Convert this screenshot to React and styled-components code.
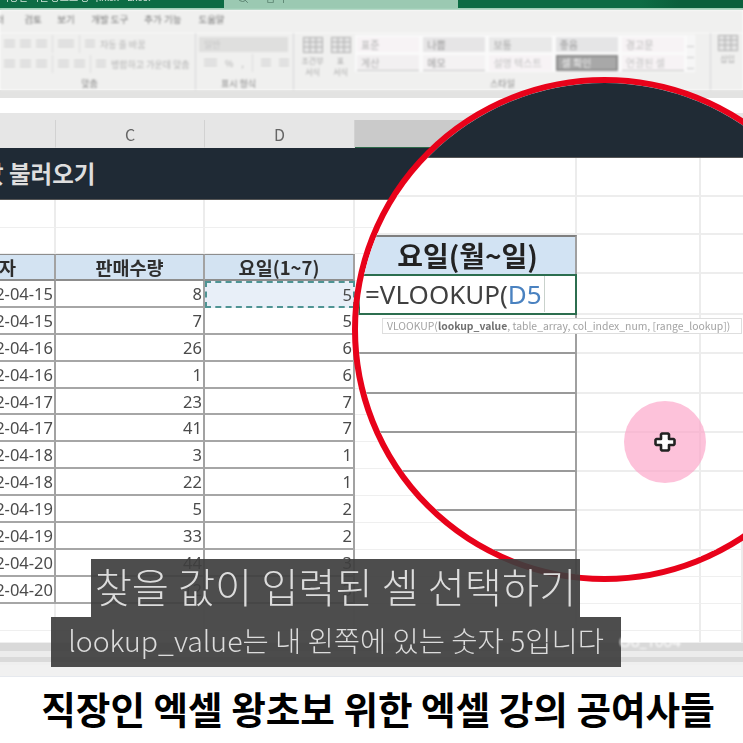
import React from 'react';
import styled, { createGlobalStyle, css } from 'styled-components';
import { Search } from 'lucide-react';

const KR = `'Noto Sans CJK KR', 'Noto Sans', sans-serif`;

const GlobalStyle = createGlobalStyle`
  html, body {
    margin: 0;
    padding: 0;
    background: #fff;
  }
  * { box-sizing: border-box; }
`;

const Page = styled.div`
  position: relative;
  width: 743px;
  height: 743px;
  overflow: hidden;
  display: flex;
  flex-direction: column;
  font-family: ${KR};
  background: #fff;
`;

/* title bar */
const TitleBar = styled.div`
  height: 10px;
  flex: none;
  display: flex;
  overflow: hidden;
  background: linear-gradient(90deg, #0c6c44 0 640px, #0a5f3c 680px);
  border-bottom: 2px solid #9accb3;
  filter: blur(0.7px);
`;

const DocName = styled.div`
  width: 224px;
  margin-top: -9px;
  font-size: 10px;
  line-height: 12px;
  color: #cfe3d8;
  white-space: nowrap;
`;

const SearchBox = styled.div`
  width: 234px;
  background: #9bc9b2;
  display: flex;
  gap: 16px;
  padding-left: 13px;
  margin-top: -2px;
  font-size: 11px;
  line-height: 11px;
  color: #5d8573;
  span { margin-top: -6px; }
  svg { margin-top: -6px; }
`;

/* ribbon */
const Tabs = styled.div`
  height: 23px;
  flex: none;
  background: #f0f0ef;
  display: flex;
  align-items: center;
  padding-bottom: 5px;
  font-size: 9.5px;
  color: #777;
  filter: blur(0.8px);
`;

const Tab = styled.span`
  margin-left: ${(p) => p.$gap}px;
  white-space: nowrap;
`;

const Ribbon = styled.div`
  height: 57px;
  flex: none;
  background: #f0f0ef;
  display: flex;
  filter: blur(0.9px);
  color: #b0b0b0;
`;

const Group = styled.div`
  width: ${(p) => p.$w}px;
  flex: none;
  display: flex;
  flex-direction: column;
  border-right: 1px solid ${(p) => (p.$bare ? 'transparent' : '#d6d6d6')};
  padding-top: ${(p) => p.$top ?? 0}px;
  padding-left: ${(p) => p.$left ?? 0}px;
  height: 57px;
`;

const GroupBody = styled.div`
  flex: 1;
  display: flex;
  flex-direction: column;
  gap: ${(p) => p.$gap ?? 8}px;
`;

const GroupLabel = styled.div`
  font-size: 9px;
  line-height: 12px;
  height: 12px;
  text-align: center;
  color: #868686;
  margin-top: auto;
  padding-right: ${(p) => p.$shift ?? 0}px;
`;

const ToolRow = styled.div`
  height: ${(p) => p.$h ?? 12}px;
  display: flex;
  align-items: center;
  gap: ${(p) => p.$gap ?? 5}px;
  font-size: 9px;
  white-space: nowrap;
`;

const Tool = styled.span`
  display: block;
  width: ${(p) => p.$w ?? 11}px;
  height: 9px;
  flex: none;
  background: repeating-linear-gradient(180deg, #c4c4c4 0 1px, transparent 1px 3px);
`;

const VRule = styled.span`
  width: 1px;
  height: 18px;
  background: #dcdcdc;
  flex: none;
`;

const NumberSelect = styled.div`
  height: 15px;
  width: 89px;
  margin-left: 3px;
  background: #dfdfde;
  font-size: 9px;
  line-height: 15px;
  padding-left: 5px;
  color: #c4c4c4;
`;

const BigTool = styled.div`
  width: 27px;
  flex: none;
  text-align: center;
  font-size: 8px;
  line-height: 11px;
  color: #a5a5a5;
  svg { display: block; margin: 0 auto 2px; }
`;

const StyleBox = styled.div`
  width: 340px;
  height: 37px;
  margin-top: 1px;
  background: #fafafa;
  display: grid;
  grid-template-columns: repeat(5, 1fr);
  gap: 3px 4px;
  padding: 2px 11px 2px 2px;
  position: relative;
`;

const StyleCell = styled.div`
  background: ${(p) => p.$bg ?? '#f7f3f5'};
  color: ${(p) => p.$color ?? '#b0b0b0'};
  font-size: 10px;
  line-height: 15px;
  padding-left: 4px;
  white-space: nowrap;
  ${(p) => p.$line && css`border-bottom: 1px solid #c4c4c4;`}
  ${(p) => p.$box && css`border: 2px solid #8c8c8c; line-height: 11px;`}
`;

const StyleScroll = styled.div`
  position: absolute;
  right: 1px;
  top: 1px;
  bottom: 1px;
  width: 7px;
  background: repeating-linear-gradient(180deg, #f6f6f6 0 10px, #c9c9c9 10px 11px);
`;

const RibbonBottom = styled.div`
  height: 8px;
  flex: none;
  background: #e3e3e2;
`;

const FormulaBar = styled.div`
  height: 15px;
  flex: none;
  background: #fff;
`;

const ColumnHeads = styled.div`
  height: 35px;
  flex: none;
  background: #e6e6e6;
  display: grid;
  grid-template-columns: 56px 149px 150px 222px 124px 42px;
  align-items: end;
  filter: blur(0.6px);
`;

const ColumnHead = styled.div`
  height: 28px;
  border-right: 1px solid #d2d2d2;
  text-align: center;
  font-size: 16px;
  line-height: 28px;
  color: ${(p) => (p.$active ? '#34684c' : '#666')};
  background: ${(p) => (p.$active ? '#cacaca' : 'transparent')};
  border-bottom: 1px solid ${(p) => (p.$active ? '#2d6a4a' : 'transparent')};
`;

/* sheet */
const Sheet = styled.div`
  height: 495px;
  flex: none;
  display: flex;
  flex-direction: column;
  overflow: hidden;
  filter: blur(0.55px);
`;

const TitleBand = styled.div`
  height: 52px;
  flex: none;
  background: #1f2a35;
  color: #dedede;
  font-size: 23.5px;
  font-weight: 700;
  line-height: 50px;
  white-space: nowrap;
  overflow: hidden;
  border-bottom: 1px solid #555;
`;

const TitleText = styled.div`
  margin-left: -18px;
`;

const Row = styled.div`
  height: ${(p) => p.$h ?? 27}px;
  flex: none;
  display: grid;
  grid-template-columns: 56px 149px 150px 222px 124px 42px;
`;

const Cell = styled.div`
  display: flex;
  align-items: center;
  justify-content: ${(p) => p.$align ?? 'flex-end'};
  padding-right: ${(p) => p.$pr ?? 1}px;
  white-space: nowrap;
  overflow: hidden;
  font-size: 16.5px;
  color: #4b4b4b;
  font-family: 'Noto Sans', ${KR};
  border-right: 2px solid ${(p) => (p.$strong ? '#a2a2a2' : '#ececec')};
  border-bottom: ${(p) => (p.$strong ? '2px solid #a6a6a6' : '1px solid #efefef')};
  ${(p) => p.$head && css`
    font-family: ${KR};
    font-weight: 700;
    font-size: 18.5px;
    color: #2e2e2e;
    background: #d3e3f2;
    border-top: 1px solid #8d8d8d;
    border-bottom: 2px solid #8d8d8d;
    border-right: 2px solid #a2a2a2;
  `}
  ${(p) => p.$copied && css`
    background: #e8eff8;
    border: 2px dashed #4f9494;
  `}
`;

const ScrollBand = styled.div`
  height: 22px;
  flex: none;
  background: linear-gradient(180deg, #d9d9d9 0 8px, #ececec 8px 14px, #dadada 14px 19px, #efefef 19px);
  filter: blur(0.7px);
`;

const StatusBand = styled.div`
  height: 12px;
  flex: none;
  background: #f1f1f1;
  border-bottom: 1px solid #e6e9ee;
`;

const Footer = styled.div`
  height: 66px;
  flex: none;
  text-align: center;
  font-size: 37.6px;
  font-weight: 700;
  line-height: 62px;
  padding-left: 13px;
  color: #000;
  white-space: nowrap;
`;

/* magnifier */
const Lens = styled.div`
  position: absolute;
  left: 352px;
  top: 77px;
  width: 505px;
  height: 505px;
  border-radius: 50%;
  border: 6px solid #e8021a;
  overflow: hidden;
  background: #fff;
`;

const LensBody = styled.div`
  display: flex;
  flex-direction: column;
  filter: blur(0.5px);
`;

const LensDark = styled.div`
  height: 75px;
  flex: none;
  background: #202b35;
  border-bottom: 1px solid #555;
`;

const LensRow = styled.div`
  height: ${(p) => p.$h ?? 39.3}px;
  flex: none;
  display: grid;
  grid-template-columns: 219px 124px 150px;
`;

const LensCell = styled.div`
  position: relative;
  border-right: 2px solid ${(p) => (p.$strong ? '#a0a0a0' : '#ececec')};
  border-bottom: 2px solid ${(p) => (p.$strong ? '#9a9a9a' : '#ededed')};
  ${(p) => p.$head && css`
    background: #d2e3f3;
    border-top: 2px solid #7f7f7f;
    border-bottom: none;
    border-right: 2px solid #a0a0a0;
    text-align: center;
    font-size: 28px;
    font-weight: 700;
    color: #222;
    line-height: 36px;
    padding-left: 2px;
  `}
  ${(p) => p.$edit && css`
    border: 2px solid #2c6e4f;
    font-family: 'Noto Sans', ${KR};
    font-size: 26px;
    line-height: 36px;
    color: #404040;
    padding-left: 5px;
    white-space: nowrap;
    overflow: visible;
  `}
`;

const RefText = styled.span`
  color: #4a82c0;
  padding-right: 2px;
  border-right: 1px solid #c9d2cc;
`;

const FormulaTip = styled.div`
  position: absolute;
  left: 382px;
  top: 318px;
  height: 16px;
  width: 360px;
  background: #fff;
  border: 1px solid #dedede;
  font-size: 10.4px;
  line-height: 14px;
  padding-left: 4px;
  color: #a2a2a2;
  white-space: nowrap;
  overflow: hidden;
  filter: blur(0.5px);
  b { color: #707070; }
`;

const ClickMark = styled.div`
  position: absolute;
  left: 624px;
  top: 401px;
  width: 82px;
  height: 82px;
  border-radius: 50%;
  background: rgba(252, 165, 200, 0.68);
  display: flex;
  align-items: center;
  justify-content: center;
`;

/* captions */
const Caption = styled.div`
  position: absolute;
  left: ${(p) => p.$left}px;
  top: ${(p) => p.$top}px;
  width: ${(p) => p.$w}px;
  height: ${(p) => p.$h}px;
  background: rgba(62, 62, 62, 0.92);
  color: #dcdcdc;
  font-size: ${(p) => p.$size}px;
  font-weight: 300;
  text-align: center;
  line-height: ${(p) => p.$h - 4}px;
  white-space: nowrap;
  filter: blur(0.35px);
`;

const Watermark = styled.div`
  position: absolute;
  left: 619px;
  top: 631px;
  font-size: 15px;
  line-height: 20px;
  color: #fff;
  font-family: 'Noto Sans', sans-serif;
  filter: blur(0.8px);
`;

const dates = ['15', '15', '16', '16', '17', '17', '18', '18', '19', '19', '20', '20'];
const amounts = [8, 7, 26, 1, 23, 41, 3, 22, 5, 33, 44, 12];
const days = [5, 5, 6, 6, 7, 7, 1, 1, 2, 2, 3, 3];
const styleNames = [
  { name: '표준' },
  { name: '나쁨', bg: '#e6e5e6', color: '#999' },
  { name: '보통', bg: '#e9e9e9', color: '#aaa' },
  { name: '좋음', bg: '#e5e5e6', color: '#999' },
  { name: '경고문', color: '#b9b9b9' },
  { name: '계산', bg: '#f2f0f1', line: true },
  { name: '메모', bg: '#f4f2f3', color: '#999', line: true },
  { name: '설명 텍스트', color: '#c4c4c4' },
  { name: '셀 확인', bg: '#a8a8a8', color: '#eee', box: true },
  { name: '연결된 셀', color: '#c4c4c4', line: true },
];

const TableIcon = () => (
  <svg width="20" height="16" viewBox="0 0 20 16">
    <rect x="0.5" y="0.5" width="19" height="15" fill="#e6e6e6" stroke="#b0b0b0" />
    <path d="M0 5h20M0 10h20M7 0v16M13 0v16" stroke="#adadad" fill="none" />
  </svg>
);

const Plus = () => (
  <svg width="24" height="24" viewBox="0 0 24 24">
    <path
      d="M9 3.500h6l1 1v4.500h4.500l1 1v4l-1 1H16v4.500l-1 1H9l-1-1V15H3.500l-1-1v-4l1-1H8V4.500z"
      fill="#fff"
      stroke="#222"
      strokeWidth="2.6"
      strokeLinejoin="round"
    />
  </svg>
);

const BlankRow = ({ h }) => (
  <Row $h={h}>
    {[0, 1, 2, 3, 4, 5].map((i) => <Cell key={i} />)}
  </Row>
);

const App = () => {
  return (
    <Page>
      <GlobalStyle />
      <TitleBar>
        <DocName>직장인 엑셀 왕초보 강의.xlsx - Excel</DocName>
        <SearchBox><Search size={12} /><span>검색</span></SearchBox>
      </TitleBar>
      <Tabs>
        <Tab $gap={-22}>데이터</Tab>
        <Tab $gap={20}>검토</Tab>
        <Tab $gap={15.5}>보기</Tab>
        <Tab $gap={16.5}>개발 도구</Tab>
        <Tab $gap={16}>추가 기능</Tab>
        <Tab $gap={17}>도움말</Tab>
      </Tabs>
      <Ribbon>
        <Group $w={196} $top={5} $left={4}>
          <GroupBody>
            <ToolRow>
              <Tool /><Tool /><Tool /><VRule /><Tool $w={16} /><VRule />
              <Tool $w={10} /><span>자동 줄 바꿈</span>
            </ToolRow>
            <ToolRow>
              <Tool /><Tool /><Tool /><VRule /><Tool /><Tool /><VRule />
              <Tool $w={10} /><span>병합하고 가운데 맞춤</span>
            </ToolRow>
          </GroupBody>
          <GroupLabel $shift={20}>맞춤</GroupLabel>
        </Group>
        <Group $w={98} $top={4}>
          <GroupBody $gap={5}>
            <NumberSelect>일반</NumberSelect>
            <ToolRow $gap={8}>
              <span />
              <Tool $w={13} /><span>%</span><span>,</span><VRule /><Tool $w={10} /><Tool $w={10} />
            </ToolRow>
          </GroupBody>
          <GroupLabel $shift={12}>표시 형식</GroupLabel>
        </Group>
        <Group $w={61} $top={2} $left={5} $bare>
          <GroupBody>
            <ToolRow $h={44} $gap={1}>
              <BigTool><TableIcon />조건부<br />서식</BigTool>
              <BigTool><TableIcon />표<br />서식</BigTool>
            </ToolRow>
          </GroupBody>
        </Group>
        <Group $w={356} $top={1}>
          <GroupBody>
            <StyleBox>
              {styleNames.map((s) => (
                <StyleCell key={s.name} $bg={s.bg} $color={s.color} $line={s.line} $box={s.box}>
                  {s.name}
                </StyleCell>
              ))}
              <StyleScroll />
            </StyleBox>
          </GroupBody>
          <GroupLabel $shift={60}>스타일</GroupLabel>
        </Group>
        <Group $w={32} $top={2} $left={3} $bare>
          <BigTool><TableIcon />삽입</BigTool>
        </Group>
      </Ribbon>
      <RibbonBottom />
      <FormulaBar />
      <ColumnHeads>
        <ColumnHead />
        <ColumnHead>C</ColumnHead>
        <ColumnHead>D</ColumnHead>
        <ColumnHead $active>E</ColumnHead>
        <ColumnHead />
        <ColumnHead />
      </ColumnHeads>
      <Sheet>
        <TitleBand><TitleText>값 불러오기</TitleText></TitleBand>
        <BlankRow h={28} />
        <BlankRow h={26} />
        <Row $h={27}>
          <Cell $head $pr={38}>판매일자</Cell>
          <Cell $head $pr={0} $align="center">판매수량</Cell>
          <Cell $head $pr={0} $align="center">요일(1~7)</Cell>
          <Cell />
          <Cell />
          <Cell />
        </Row>
        {dates.map((d, i) => (
          <Row key={i} $h={26.9}>
            <Cell $strong>2022-04-{d}</Cell>
            <Cell $strong>{amounts[i]}</Cell>
            <Cell $strong $copied={i === 0}>{days[i]}</Cell>
            <Cell />
            <Cell />
            <Cell />
          </Row>
        ))}
        <BlankRow h={27} />
        <BlankRow h={12} />
      </Sheet>
      <ScrollBand />
      <StatusBand />
      <Footer>직장인 엑셀 왕초보 위한 엑셀 강의 공여사들</Footer>

      <Lens>
        <LensBody>
          <LensDark />
          <LensRow $h={39}><LensCell /><LensCell /><LensCell /></LensRow>
          <LensRow $h={38}><LensCell /><LensCell /><LensCell /></LensRow>
          <LensRow $h={39}><LensCell $head>요일(월~일)</LensCell><LensCell /><LensCell /></LensRow>
          <LensRow $h={41}>
            <LensCell $edit>=VLOOKUP(<RefText>D5</RefText></LensCell>
            <LensCell /><LensCell />
          </LensRow>
          {[0, 1, 2, 3, 4, 5, 6].map((i) => (
            <LensRow key={i}><LensCell $strong /><LensCell /><LensCell /></LensRow>
          ))}
        </LensBody>
      </Lens>
      <FormulaTip>
        VLOOKUP(<b>lookup_value</b>, table_array, col_index_num, [range_lookup])
      </FormulaTip>
      <ClickMark><Plus /></ClickMark>

      <Caption $left={91} $top={559} $w={489} $h={58} $size={40.4}>찾을 값이 입력된 셀 선택하기</Caption>
      <Caption $left={51} $top={617} $w={570} $h={50} $size={28.5}>lookup_value는 내 왼쪽에 있는 숫자 5입니다</Caption>
      <Watermark>Oo_1004</Watermark>
    </Page>
  );
};

export default App;
